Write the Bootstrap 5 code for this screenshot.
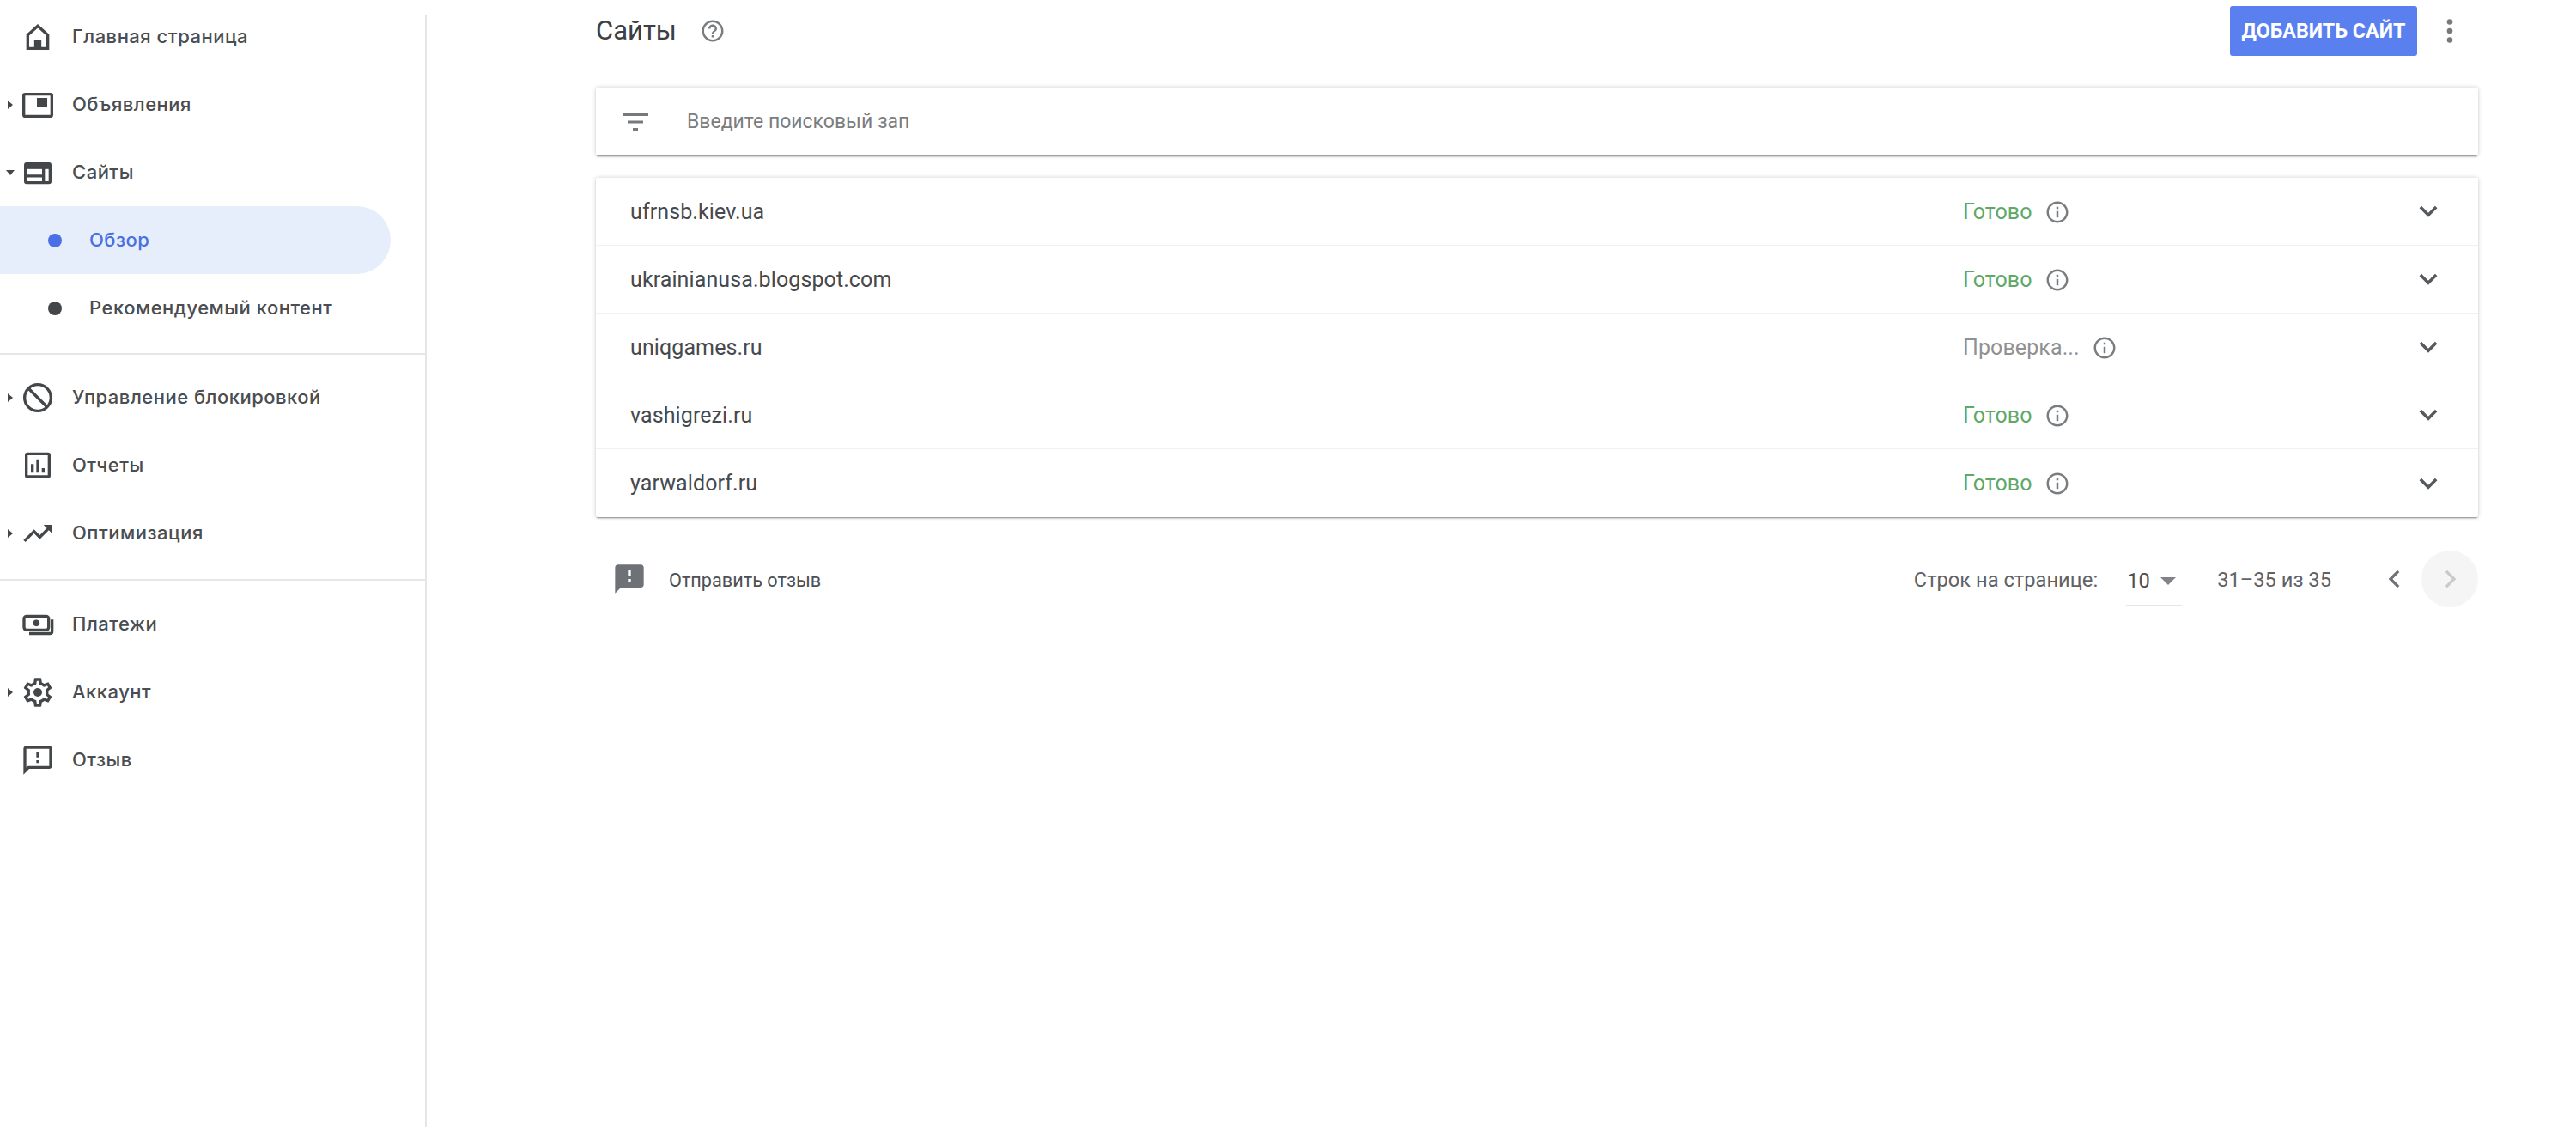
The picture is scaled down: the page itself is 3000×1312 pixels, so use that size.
<!DOCTYPE html>
<html lang="ru">
<head>
<meta charset="utf-8">
<title>Сайты</title>
<link rel="stylesheet" href="https://cdn.jsdelivr.net/npm/bootstrap@5.3.0/dist/css/bootstrap.min.css">
<style>
body{font-family:Roboto,"Liberation Sans",sans-serif;color:#3c4043;background:#fff;min-height:1312px}
.shell{min-height:1312px}
.side{width:497px;flex:none;margin-top:17px;border-right:2px solid #e4e6e8}
.side-nav{margin-top:-14px;font-family:Inter,"Noto Sans",sans-serif;font-weight:500;font-size:22px;letter-spacing:.5px;color:#4a4d51}
.side-row{height:79px;color:#4a4d51;padding:0}
.caret-slot{width:24px;flex:none;display:flex;justify-content:center;padding-left:0}
.ic40{width:40px;height:40px;flex:none;fill:#44474a;margin-right:20px}
.ic-s{fill:none;stroke:#44474a;stroke-width:2}
.sub-row{height:79px;padding-left:56px;color:#4a4d51}
.sub-row.on{background:#e6edfb;color:#4a6fe0;width:455px;border-radius:0 40px 40px 0}
.dot{width:16px;height:16px;border-radius:50%;background:#44474a;margin-right:32px;flex:none}
.on .dot{background:#4a6fe6}
.side-sep{height:2px;background:#e4e6e8;margin:14px 0 11px}
.side-sep-first{margin:13px 0 10px}
.main-col{flex:1;padding:0 114px 0 197px}
.top-bar{height:58px;margin-top:7px;margin-bottom:37px;padding-right:13px}
.page-title{font-size:31px;font-weight:400;color:#3c4043;margin:0 0 2px 0;line-height:1}
.q-ic{width:30px;height:30px;fill:#7a7d80;margin-left:27px}
.add-btn{background:#5a80f0;border:0;border-radius:3px;color:#fff;font-weight:700;font-size:23.300px;height:58px;width:218px;padding:0;white-space:nowrap}
.kebab{width:40px;height:40px;fill:#77797c;margin-left:18px}
.pane{border:0;border-radius:2px;box-shadow:0 2px 2px -1px rgba(0,0,0,.42),0 0 5px rgba(0,0,0,.2)}
.search-pane{height:79px;margin-bottom:26px;padding-left:31px;flex-direction:row;align-items:center}
.filter-ic{width:30px;height:20px;fill:#77797c;flex:none;margin-bottom:0}
.search-in{border:0;box-shadow:none!important;font-size:23px;padding:0;margin-left:45px;height:40px;color:#777;border-radius:0;background:transparent}
.search-in::placeholder{color:#7b7d80;opacity:1}
.site-row{height:79px;padding:1px 38px 0 40px;border-color:#f1f1f1;font-size:25px;letter-spacing:.1px;color:#46494d}
.status{width:522px;flex:none;font-size:25px}
.st-ok{color:#5fa868}
.st-wait{color:#8f9193}
.i-ic{width:30px;height:30px;fill:#7a7d80;margin-left:14px;flex:none}
.chev{width:40px;height:40px;fill:none;stroke:#55585c;stroke-width:2.1;flex:none;margin-top:-1px}
.foot{height:66px;margin-top:39px;padding-left:19px;font-size:23.7px;color:#5f6368}
.fb-ic{width:40px;height:40px;fill:#6e7276;flex:none;margin-right:26px}
.fb-txt{font-size:21.700px;color:#4d5054;margin-top:4px}
.pager-label{margin-top:3px}
.per-page{width:65px;height:52px;margin:12px 41px 0 33px;padding:0 0 5px 1px;border-bottom:2px solid #e6e6e6;color:#4d5054}
.tri{width:0;height:0;border-left:9px solid transparent;border-right:9px solid transparent;border-top:9px solid #818386;margin-left:12px}
.range{margin-top:3px;margin-right:54px}
.page-prev{width:40px;height:40px;fill:none;stroke:#6e7276;stroke-width:2;margin-right:11px}
.page-next{width:66px;height:66px;border-radius:50%;background:#f5f5f5}
.page-next svg{width:40px;height:40px;fill:none;stroke:#c9cacb;stroke-width:2}
</style>
</head>
<body>
<div class="shell d-flex">
  <aside class="side">
    <nav class="side-nav d-flex flex-column">
      <div class="side-row d-flex align-items-center">
        <span class="caret-slot"></span>
        <svg class="ic40" viewBox="0 0 24 24"><path class="ic-s" d="M5 10.6 12 4.3l7 6.3V20H5z"/><path d="M9.5 14h5v6h-5z"/></svg>
        <span>Главная страница</span>
      </div>
      <div class="side-row d-flex align-items-center">
        <span class="caret-slot"><svg width="8" height="12" viewBox="0 0 8 12"><path d="M1 1l6 5-6 5z" fill="#44474a"/></svg></span>
        <svg class="ic40" viewBox="0 0 24 24"><rect class="ic-s" x="2.2" y="4.6" width="19.6" height="15.4" rx="1"/><path d="M11.4 7.2h7.2v6h-7.2z"/></svg>
        <span>Объявления</span>
      </div>
      <div class="side-row d-flex align-items-center">
        <span class="caret-slot"><svg width="12" height="8" viewBox="0 0 12 8"><path d="M1 1h10L6 7z" fill="#44474a"/></svg></span>
        <svg class="ic40" viewBox="0 0 24 24"><rect class="ic-s" x="3.4" y="5.8" width="17.2" height="13.2" rx=".8"/><path d="M3 5.2h18v4.3H3z"/><path class="ic-s" d="M16 9v10M3.4 14.3H16"/></svg>
        <span>Сайты</span>
      </div>
      <div class="sub-row on d-flex align-items-center"><span class="dot"></span><span>Обзор</span></div>
      <div class="sub-row d-flex align-items-center"><span class="dot"></span><span>Рекомендуемый контент</span></div>
      <div class="side-sep side-sep-first"></div>
      <div class="side-row d-flex align-items-center">
        <span class="caret-slot"><svg width="8" height="12" viewBox="0 0 8 12"><path d="M1 1l6 5-6 5z" fill="#44474a"/></svg></span>
        <svg class="ic40" viewBox="0 0 24 24"><circle class="ic-s" cx="12" cy="12" r="9.2"/><path class="ic-s" d="M5.4 5.4l13.2 13.2"/></svg>
        <span>Управление блокировкой</span>
      </div>
      <div class="side-row d-flex align-items-center">
        <span class="caret-slot"></span>
        <svg class="ic40" viewBox="0 0 24 24"><rect class="ic-s" x="4" y="3.8" width="16" height="16" rx=".8"/><path d="M7.2 11h2v6h-2zM11 7.6h2V17h-2zM14.800 13.800h2V17h-2z"/></svg>
        <span>Отчеты</span>
      </div>
      <div class="side-row d-flex align-items-center">
        <span class="caret-slot"><svg width="8" height="12" viewBox="0 0 8 12"><path d="M1 1l6 5-6 5z" fill="#44474a"/></svg></span>
        <svg class="ic40" viewBox="0 0 24 24"><path d="M16 6l2.29 2.29-4.88 4.88-4-4L2 16.59 3.41 18l6-6 4 4 6.3-6.29L22 12V6z"/></svg>
        <span>Оптимизация</span>
      </div>
      <div class="side-sep"></div>
      <div class="side-row d-flex align-items-center">
        <span class="caret-slot"></span>
        <svg class="ic40" viewBox="0 0 24 24"><rect class="ic-s" x="2.400" y="6.200" width="17.200" height="9.600" rx="1.800"/><circle cx="11" cy="11" r="2.300"/><path class="ic-s" d="M22 8.500V17a1.300 1.300 0 0 1-1.300 1.300H6"/></svg>
        <span>Платежи</span>
      </div>
      <div class="side-row d-flex align-items-center">
        <span class="caret-slot"><svg width="8" height="12" viewBox="0 0 8 12"><path d="M1 1l6 5-6 5z" fill="#44474a"/></svg></span>
        <svg class="ic40" viewBox="0 0 24 24"><path d="M19.43 12.98c.04-.32.07-.64.07-.98 0-.34-.03-.66-.07-.98l2.11-1.65c.19-.15.24-.42.12-.64l-2-3.46c-.09-.16-.26-.25-.44-.25-.06 0-.12.01-.17.03l-2.49 1c-.52-.4-1.08-.73-1.69-.98l-.38-2.65C14.46 2.18 14.25 2 14 2h-4c-.25 0-.46.18-.49.42l-.38 2.65c-.61.25-1.17.59-1.69.98l-2.49-1c-.06-.02-.12-.03-.18-.03-.17 0-.34.09-.43.25l-2 3.46c-.13.22-.07.49.12.64l2.11 1.65c-.04.32-.07.65-.07.98 0 .33.03.66.07.98l-2.11 1.65c-.19.15-.24.42-.12.64l2 3.46c.09.16.26.25.44.25.06 0 .12-.01.17-.03l2.49-1c.52.4 1.08.73 1.69.98l.38 2.65c.03.24.24.42.49.42h4c.25 0 .46-.18.49-.42l.38-2.65c.61-.25 1.17-.59 1.69-.98l2.49 1c.06.02.12.03.18.03.17 0 .34-.09.43-.25l2-3.46c.12-.22.07-.49-.12-.64l-2.11-1.65zm-1.98-1.71c.04.31.05.52.05.73 0 .21-.02.43-.05.73l-.14 1.13.89.7 1.08.84-.7 1.21-1.27-.51-1.04-.42-.9.68c-.43.32-.84.56-1.25.73l-1.06.43-.16 1.13-.2 1.35h-1.4l-.19-1.35-.16-1.13-1.06-.43c-.43-.18-.83-.41-1.23-.71l-.91-.7-1.06.43-1.27.51-.7-1.21 1.08-.84.89-.7-.14-1.13c-.03-.31-.05-.54-.05-.74s.02-.43.05-.73l.14-1.13-.89-.7-1.08-.84.7-1.21 1.27.51 1.04.42.9-.68c.43-.32.84-.56 1.25-.73l1.06-.43.16-1.13.2-1.35h1.39l.19 1.35.16 1.13 1.06.43c.43.18.83.41 1.23.71l.91.7 1.06-.43 1.27-.51.7 1.21-1.07.85-.89.7.14 1.13z"/><circle cx="12" cy="12" r="3"/></svg>
        <span>Аккаунт</span>
      </div>
      <div class="side-row d-flex align-items-center">
        <span class="caret-slot"></span>
        <svg class="ic40" viewBox="0 0 24 24"><path d="M20 2H4c-1.100 0-1.990.9-1.990 2L2 22l4-4h14c1.100 0 2-.9 2-2V4c0-1.100-.9-2-2-2zm0 14H5.170L4 17.170V4h16v12zm-9-4h2v2h-2zm0-6h2v4h-2z"/></svg>
        <span>Отзыв</span>
      </div>
    </nav>
  </aside>

  <main class="main-col">
    <div class="top-bar d-flex align-items-center">
      <h1 class="page-title">Сайты</h1>
      <svg class="q-ic" viewBox="0 0 24 24"><path d="M11 18h2v-2h-2v2zm1-16C6.480 2 2 6.480 2 12s4.480 10 10 10 10-4.480 10-10S17.520 2 12 2zm0 18c-4.410 0-8-3.590-8-8s3.590-8 8-8 8 3.590 8 8-3.590 8-8 8zm0-14c-2.210 0-4 1.790-4 4h2c0-1.100.9-2 2-2s2 .9 2 2c0 2-3 1.750-3 5h2c0-2.250 3-2.500 3-5 0-2.210-1.790-4-4-4z"/></svg>
      <button type="button" class="btn btn-primary add-btn ms-auto">ДОБАВИТЬ САЙТ</button>
      <svg class="kebab" viewBox="0 0 24 24"><circle cx="12" cy="5.700" r="2"/><circle cx="12" cy="12" r="2"/><circle cx="12" cy="18.300" r="2"/></svg>
    </div>

    <div class="card pane search-pane d-flex">
      <svg class="filter-ic" viewBox="0 0 30 20"><path d="M0 0h30v3H0zM6 8.500h18v3H6zM12 17h6v3h-6z"/></svg>
      <input class="form-control search-in" type="text" placeholder="Введите поисковый зап" aria-label="Поиск">
    </div>

    <div class="card pane">
      <ul class="list-group list-group-flush">
        <li class="list-group-item site-row d-flex align-items-center"><span class="flex-grow-1">ufrnsb.kiev.ua</span><span class="status d-flex align-items-center st-ok">Готово<svg class="i-ic" viewBox="0 0 24 24"><path d="M11 7h2v2h-2zm0 4h2v6h-2zm1-9C6.480 2 2 6.480 2 12s4.480 10 10 10 10-4.480 10-10S17.520 2 12 2zm0 18c-4.410 0-8-3.590-8-8s3.590-8 8-8 8 3.590 8 8-3.590 8-8 8z"/></svg></span><svg class="chev" viewBox="0 0 24 24"><path d="M6.500 9l5.500 5.500L17.500 9"/></svg></li>
        <li class="list-group-item site-row d-flex align-items-center"><span class="flex-grow-1">ukrainianusa.blogspot.com</span><span class="status d-flex align-items-center st-ok">Готово<svg class="i-ic" viewBox="0 0 24 24"><path d="M11 7h2v2h-2zm0 4h2v6h-2zm1-9C6.480 2 2 6.480 2 12s4.480 10 10 10 10-4.480 10-10S17.520 2 12 2zm0 18c-4.410 0-8-3.590-8-8s3.590-8 8-8 8 3.590 8 8-3.590 8-8 8z"/></svg></span><svg class="chev" viewBox="0 0 24 24"><path d="M6.500 9l5.500 5.500L17.500 9"/></svg></li>
        <li class="list-group-item site-row d-flex align-items-center"><span class="flex-grow-1">uniqgames.ru</span><span class="status d-flex align-items-center st-wait">Проверка...<svg class="i-ic" viewBox="0 0 24 24"><path d="M11 7h2v2h-2zm0 4h2v6h-2zm1-9C6.480 2 2 6.480 2 12s4.480 10 10 10 10-4.480 10-10S17.520 2 12 2zm0 18c-4.410 0-8-3.590-8-8s3.590-8 8-8 8 3.590 8 8-3.590 8-8 8z"/></svg></span><svg class="chev" viewBox="0 0 24 24"><path d="M6.500 9l5.500 5.500L17.500 9"/></svg></li>
        <li class="list-group-item site-row d-flex align-items-center"><span class="flex-grow-1">vashigrezi.ru</span><span class="status d-flex align-items-center st-ok">Готово<svg class="i-ic" viewBox="0 0 24 24"><path d="M11 7h2v2h-2zm0 4h2v6h-2zm1-9C6.480 2 2 6.480 2 12s4.480 10 10 10 10-4.480 10-10S17.520 2 12 2zm0 18c-4.410 0-8-3.590-8-8s3.590-8 8-8 8 3.590 8 8-3.590 8-8 8z"/></svg></span><svg class="chev" viewBox="0 0 24 24"><path d="M6.500 9l5.500 5.500L17.500 9"/></svg></li>
        <li class="list-group-item site-row d-flex align-items-center"><span class="flex-grow-1">yarwaldorf.ru</span><span class="status d-flex align-items-center st-ok">Готово<svg class="i-ic" viewBox="0 0 24 24"><path d="M11 7h2v2h-2zm0 4h2v6h-2zm1-9C6.480 2 2 6.480 2 12s4.480 10 10 10 10-4.480 10-10S17.520 2 12 2zm0 18c-4.410 0-8-3.590-8-8s3.590-8 8-8 8 3.590 8 8-3.590 8-8 8z"/></svg></span><svg class="chev" viewBox="0 0 24 24"><path d="M6.500 9l5.500 5.500L17.500 9"/></svg></li>
      </ul>
    </div>

    <div class="foot d-flex align-items-center">
      <svg class="fb-ic" viewBox="0 0 24 24"><path d="M20 2H4c-1.100 0-1.990.9-1.990 2L2 22l4-4h14c1.100 0 2-.9 2-2V4c0-1.100-.9-2-2-2zm-7 12h-2v-2h2v2zm0-4h-2V6h2v4z"/></svg>
      <span class="fb-txt">Отправить отзыв</span>
      <span class="pager-label ms-auto">Строк на странице:</span>
      <div class="per-page d-flex align-items-center"><span>10</span><span class="tri"></span></div>
      <span class="range">31–35 из 35</span>
      <svg class="page-prev" viewBox="0 0 24 24"><path d="M14.500 6.500L9 12l5.500 5.500"/></svg>
      <div class="page-next d-flex align-items-center justify-content-center"><svg viewBox="0 0 24 24"><path d="M9.500 6.500L15 12l-5.500 5.500"/></svg></div>
    </div>
  </main>
</div>
<script src="https://cdn.jsdelivr.net/npm/bootstrap@5.3.0/dist/js/bootstrap.bundle.min.js"></script>
</body>
</html>
